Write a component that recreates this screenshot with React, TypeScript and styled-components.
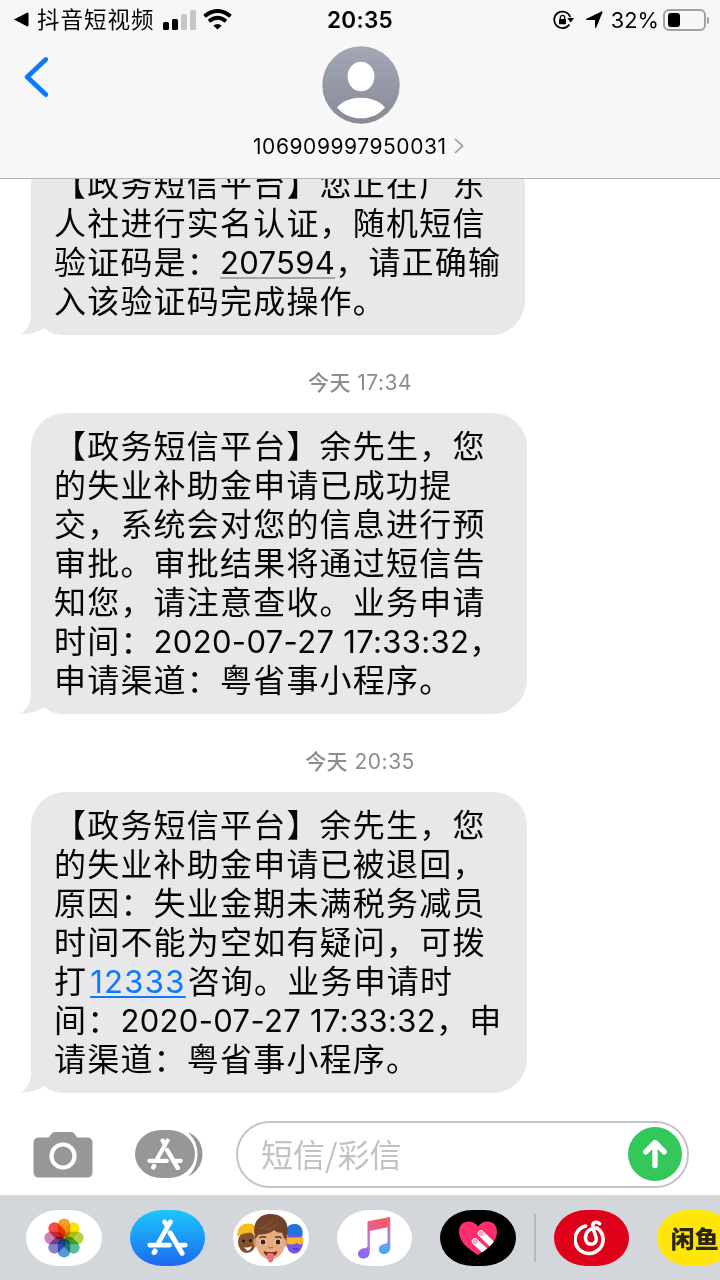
import React from 'react';
import styled, { createGlobalStyle } from 'styled-components';

const cjk = '"Noto Sans CJK SC", sans-serif';
const latin = 'Inter, "Noto Sans CJK SC", sans-serif';

type Part = string | { num?: string; code?: string; link?: string };

const messages: { time?: string; width: number; lines: Part[][] }[] = [
  {
    width: 494,
    lines: [
      ['【政务短信平台】您正在广东'],
      ['人社进行实名认证，随机短信'],
      ['验证码是：', { code: '207594' }, '，请正确输'],
      ['入该验证码完成操作。'],
    ],
  },
  {
    time: '17:34',
    width: 496,
    lines: [
      ['【政务短信平台】余先生，您'],
      ['的失业补助金申请已成功提'],
      ['交，系统会对您的信息进行预'],
      ['审批。审批结果将通过短信告'],
      ['知您，请注意查收。业务申请'],
      ['时间：', { num: '2020-07-27 17:33:32' }, '，'],
      ['申请渠道：粤省事小程序。'],
    ],
  },
  {
    time: '20:35',
    width: 496,
    lines: [
      ['【政务短信平台】余先生，您'],
      ['的失业补助金申请已被退回，'],
      ['原因：失业金期未满税务减员'],
      ['时间不能为空如有疑问，可拨'],
      ['打', { link: '12333' }, '咨询。业务申请时'],
      ['间：', { num: '2020-07-27 17:33:32' }, '，申'],
      ['请渠道：粤省事小程序。'],
    ],
  },
];

const renderPart = (part: Part, i: number) => {
  if (typeof part === 'string') return part;
  if (part.link) return <PhoneLink key={i}>{part.link}</PhoneLink>;
  if (part.code) return <Code key={i}>{part.code}</Code>;
  return <Digits key={i}>{part.num}</Digits>;
};

const StoreGlyph = ({ size }: { size: number }) => (
  <svg width={size} height={size * 0.9} viewBox="0 0 40 36" fill="none" stroke="#fff" strokeWidth="4.6" strokeLinecap="round">
    <path d="M22.8 2.8 11.6 22.6M17.2 2.8l2.600 4.400" />
    <path d="M22.500 13.500 34.200 33.4" strokeWidth="5" />
    <path d="M2.600 25.4H22M32 25.4h5.400" />
    <path d="M7.800 31.200 7 32.600" strokeWidth="5" />
  </svg>
);

const petals = ['#f9981d', '#f5e100', '#b0d136', '#4fb892', '#4a94d8', '#8478c6', '#cc78b4', '#f4453c'];

const PhotosIcon = () => (
  <svg width="40" height="40" viewBox="-20 -20 40 40">
    {petals.map((color, i) => (
      <rect
        key={color}
        x="-6.2"
        y="-19.6"
        width="12.4"
        height="19.2"
        rx="6.2"
        fill={color}
        fillOpacity="0.95"
        transform={`rotate(${i * 45})`}
        style={{ mixBlendMode: 'multiply' }}
      />
    ))}
  </svg>
);

const MemojiIcon = () => (
  <svg width="75" height="56" viewBox="0 0 75 56">
    <ellipse cx="14" cy="32" rx="9" ry="11" fill="#84512f" />
    <path d="M4 26.500C4 17.500 9 13.500 15 13.500S25 17 25 24Q14 20.500 4 26.500Z" fill="#f5bd16" />
    <circle cx="10.500" cy="31" r="1.500" fill="#2a1710" />
    <circle cx="17.500" cy="30.500" r="1.500" fill="#2a1710" />
    <path d="M11 37q4 1.500 8-1-2 5-5 4.500Z" fill="#fff" />
    <ellipse cx="61.500" cy="32" rx="8.500" ry="11.500" fill="#7557e8" />
    <path d="M53 25C52 17 57 13.500 62 14c6 .5 8.500 5 7.500 12Z" fill="#2373dd" />
    <path d="M53 27.500h17.500v5q-3 3.500-7 .5-4 3-10.500 0Z" fill="#f8b727" />
    <path d="M60 39h5" stroke="#5031b8" strokeWidth="1.500" />
    <ellipse cx="23" cy="32" rx="2.600" ry="4.500" fill="#d99569" />
    <ellipse cx="52" cy="32" rx="2.600" ry="4.500" fill="#d99569" />
    <path d="M23 20h29v13c0 9-7.500 16.500-14.500 16.500S23 42 23 33Z" fill="#e9aa7e" />
    <path d="M22.500 29C18 14 25 4 37 4c15 0 21 10 16 26-2-1.500-3-4-3.800-7.500-3 .8-6.200-.5-8.200-2.500-4 3.500-9.500 4.500-14.500 4.500-2 1-3 2.500-4 4.500Z" fill="#70432a" />
    <path d="M25 19c7-1 12-5 15-9M32 20c6-1 10-4 13-7" stroke="#935d3d" fill="none" />
    <path d="M26.500 28q3-2 6.500-.5M42 27.500q3.500-1.500 6.500 .5" stroke="#5a321d" strokeWidth="1.500" fill="none" />
    <ellipse cx="30" cy="32" rx="3.300" ry="2.800" fill="#fff" />
    <ellipse cx="45" cy="32" rx="3.300" ry="2.800" fill="#fff" />
    <circle cx="30" cy="32" r="2.500" fill="#3d251c" />
    <circle cx="45" cy="32" r="2.500" fill="#3d251c" />
    <path d="M35 37q2.500 1.800 5 0" stroke="#bd7550" strokeWidth="1.400" fill="none" />
    <path d="M30.500 41q7 2.500 14 0-1 5.500-7 5.500t-7-5.500Z" fill="#74242a" />
    <path d="M34 43.500q3.500-1 7 0v4q-1 5-3.500 5t-3.500-5Z" fill="#ed6f78" />
  </svg>
);

const MusicIcon = () => (
  <svg width="34" height="42" viewBox="0 0 34 42">
    <defs>
      <linearGradient id="note" x1="0" y1="1" x2="0.350" y2="0">
        <stop offset="0" stopColor="#7a63fb" />
        <stop offset="0.480" stopColor="#b577d8" />
        <stop offset="1" stopColor="#f8596d" />
      </linearGradient>
      <linearGradient id="noteRight" x1="0" y1="0" x2="0" y2="1">
        <stop offset="0" stopColor="#f8596d" />
        <stop offset="0.550" stopColor="#a58ad8" />
        <stop offset="1" stopColor="#3fadf5" />
      </linearGradient>
    </defs>
    <path d="M10.500 5.500q0-1.200 1.500-1.500L32 .3V10L12.800 14v20.500c0 5-3 7-6.300 7-3 0-5.500-2-5.500-4.500 0-4 3.500-5.500 7-6 2-.3 2.500-1 2.500-2.500Z" fill="url(#note)" />
    <path d="M30.500 .6 32 .3q1.300-.2 1.300 1V30c0 5-3 7-6.300 7-3 0-5.200-2-5.200-4.500 0-3.700 3.200-5.200 6.500-5.700 2-.3 2.200-1 2.200-2.500Z" fill="url(#noteRight)" />
  </svg>
);

const HeartIcon = () => (
  <svg width="40" height="36" viewBox="0 0 40 36">
    <defs>
      <clipPath id="heart">
        <path d="M20 35C8 28 1 20 1 12 1 5 5 1.500 10.500 1.500c4.500 0 7.500 2 9.500 5 2-3 5-5 9.500-5C35 1.500 39 5 39 12c0 8-7 16-19 23Z" />
      </clipPath>
    </defs>
    <g clipPath="url(#heart)">
      <path d="M0 0h40v36H0Z" fill="#ff2d6b" />
      <path d="M23 13.500 38 28M17 21.500l14 13" stroke="#fff" strokeWidth="6.400" strokeLinecap="round" />
      <circle cx="23" cy="13.500" r="1.900" fill="#ffb3c8" stroke="#ff7fa4" />
      <circle cx="17" cy="21.500" r="1.900" fill="#ffb3c8" stroke="#ff7fa4" />
    </g>
  </svg>
);

const NeteaseIcon = () => (
  <svg width="34" height="36" viewBox="0 0 34 36" fill="none" stroke="#fff" strokeWidth="3.600" strokeLinecap="round">
    <path d="M11.500 6A14 14 0 1 0 23 8C16 8 11.500 11.500 11.500 17.800c0 4 2.500 6.400 5.500 6.400s5.300-2.400 5.300-5.400c0-2.500-3.600-9.600-3.600-13.100 0-3.500 4-4.500 6.800-2" />
  </svg>
);

const App = () => {
  return (
    <Screen>
      <GlobalStyle />
      <Header>
        <StatusBar>
          <StatusLeft>
            <svg width="15" height="15" viewBox="0 0 15 15">
              <path d="M0 7.500 13 .7q1.500-.4 1.500 1v11.600q0 1.400-1.500 1Z" />
            </svg>
            <BackApp>抖音短视频</BackApp>
            <Signal>
              <Bar $h={8} />
              <Bar $h={11} />
              <Bar $h={16} $off />
              <Bar $h={20} $off />
            </Signal>
            <svg width="29" height="21" viewBox="0 0 29 21" fill="none" stroke="#000" strokeWidth="3.900">
              <path d="M1.500 7.300Q14.500-3.300 27.500 7.300" />
              <path d="M6 12.300Q14.500 5.300 23 12.300" />
              <path d="M10.300 16.400q4.200-3 8.400 0L14.500 20.400Z" fill="#000" stroke="none" />
            </svg>
          </StatusLeft>
          <Clock>20:35</Clock>
          <StatusRight>
            <svg width="21" height="20" viewBox="0 0 21 20">
              <path d="M17.300 7A8.300 8.300 0 1 0 16.400 14.500" fill="none" stroke="#000" strokeWidth="1.800" />
              <path d="M14.300 8H21l-3.400 4.500Z" />
              <rect x="6" y="9" width="7" height="5.300" rx="0.800" />
              <path d="M7.300 9.500V7.600a2.200 2.200 0 0 1 4.400 0v2" fill="none" stroke="#000" strokeWidth="1.300" />
            </svg>
            <Arrow width="18" height="18" viewBox="0 0 18 18">
              <path d="M17.500 1.200 11.200 16.500q-.8 1.200-1.200-.2V9H1.700q-1.600-.2-.2-1.200L16.500 .4q1.200-.4 1 .8Z" />
            </Arrow>
            <Percent>32%</Percent>
            <Battery />
          </StatusRight>
        </StatusBar>
        <NavRow>
          <svg width="26" height="42" viewBox="0 0 26 42" fill="none" stroke="#0a7aff" strokeWidth="4.800" strokeLinecap="round" strokeLinejoin="round">
            <path d="M21.700 3.500 3.200 21l18.500 17.500" />
          </svg>
          <svg width="78" height="78" viewBox="0 0 78 78">
            <defs>
              <linearGradient id="avatar" x1="0" y1="0" x2="0" y2="1">
                <stop offset="0" stopColor="#a3a8b6" />
                <stop offset="1" stopColor="#878a97" />
              </linearGradient>
            </defs>
            <circle cx="39" cy="39" r="38.700" fill="url(#avatar)" />
            <ellipse cx="39" cy="30.500" rx="13.400" ry="14.800" fill="#fff" />
            <path d="M15 61.500C21 54.500 30 51.700 39 51.700s18 2.800 24 9.800C57 69 48 72.300 39 72.300S21 69 15 61.500Z" fill="#fff" />
          </svg>
        </NavRow>
        <Contact>
          106909997950031
          <svg width="10" height="16" viewBox="0 0 10 16" fill="none" stroke="#9a9a9f" strokeWidth="1.700">
            <path d="m1 1 7.500 7L1 15" />
          </svg>
        </Contact>
      </Header>

      <Thread>
        {messages.map((message, i) => (
          <React.Fragment key={i}>
            {message.time && (
              <Stamp>
                <b>今天</b> {message.time}
              </Stamp>
            )}
            <Bubble $width={message.width}>
              {message.lines.map((line, n) => (
                <Line key={n}>{line.map(renderPart)}</Line>
              ))}
              <Tail width="46" height="44" viewBox="0 0 46 44">
                <path d="M11 0V23C11 32 8 39 0 43.500 9 44 18 41 24 37c6 5 12 7 22 7V0Z" fill="#e8e8ea" />
              </Tail>
            </Bubble>
          </React.Fragment>
        ))}
      </Thread>

      <Compose>
        <svg width="60" height="47" viewBox="0 0 60 47">
          <path d="M6 6.500h9c2 0 3-5.500 7-5.500h16c4 0 5 5.500 7 5.500h9q5.500 0 5.500 5.500v29q0 5.500-5.500 5.500H6Q.5 46.500.5 41V12Q.5 6.500 6 6.500Z" fill="#979797" />
          <circle cx="30" cy="25" r="11.500" fill="none" stroke="#fff" strokeWidth="4.200" />
        </svg>
        <AppsButton>
          <AppsPill>
            <StoreGlyph size={36} />
          </AppsPill>
          <svg width="16" height="46" viewBox="0 0 16 46">
            <path d="M1 1.500C9 4 15.500 12 15.500 23S9 42 1 45.500C7 40 10.500 32 10.500 23S7 7 1 1.500Z" fill="#979797" />
          </svg>
        </AppsButton>
        <Field>
          <Placeholder>短信/彩信</Placeholder>
          <Send>
            <svg width="26" height="30" viewBox="0 0 26 30" fill="none" stroke="#fff" strokeWidth="5.400" strokeLinecap="round" strokeLinejoin="round">
              <path d="M13 26.500V4M3.800 12.800 13 3.500l9.200 9.300" />
            </svg>
          </Send>
        </Field>
      </Compose>

      <Drawer>
        <AppIcon><PhotosIcon /></AppIcon>
        <AppIcon $bg="linear-gradient(#1cc8fb, #1d68f0)"><StoreGlyph size={41} /></AppIcon>
        <AppIcon><MemojiIcon /></AppIcon>
        <AppIcon><MusicIcon /></AppIcon>
        <AppIcon $bg="#000"><HeartIcon /></AppIcon>
        <Divider />
        <AppIcon $bg="#df0019"><NeteaseIcon /></AppIcon>
        <AppIcon $bg="#ffe60a"><Fish>闲鱼</Fish></AppIcon>
      </Drawer>
    </Screen>
  );
};

const GlobalStyle = createGlobalStyle`
  body {
    margin: 0;
    background: #fff;
  }
  * {
    box-sizing: border-box;
  }
  svg {
    display: block;
    flex-shrink: 0;
  }
`;

const Screen = styled.div`
  width: 720px;
  height: 1280px;
  display: flex;
  flex-direction: column;
  overflow: hidden;
  background: #fff;
  color: #050505;
  font-family: ${latin};
`;

const Header = styled.header`
  height: 179px;
  flex-shrink: 0;
  background: #f7f7f8;
  border-bottom: 1px solid #b4b4b6;
`;

const StatusBar = styled.div`
  height: 39px;
  display: grid;
  grid-template-columns: 1fr 80px 1fr;
  align-items: center;
`;

const StatusLeft = styled.div`
  display: flex;
  align-items: center;
  padding-left: 14px;
`;

const BackApp = styled.span`
  width: 118px;
  margin: 0 8px;
  font: 400 22.5px/36px ${cjk};
  letter-spacing: 1px;
  white-space: nowrap;
  padding-bottom: 3px;
`;

const Signal = styled.div`
  display: flex;
  align-items: flex-end;
  gap: 3px;
  margin-right: 7px;
`;

const Bar = styled.i<{ $h: number; $off?: boolean }>`
  width: 6px;
  height: ${({ $h }) => $h}px;
  border-radius: 1.5px;
  background: ${({ $off }) => ($off ? '#c6c6c7' : '#000')};
`;

const Clock = styled.div`
  text-align: center;
  font-size: 22.5px;
  font-weight: 600;
  letter-spacing: 0.3px;
`;

const StatusRight = styled.div`
  display: flex;
  align-items: center;
  justify-content: flex-end;
  padding-right: 14px;
`;

const Arrow = styled.svg`
  margin-left: 11px;
`;

const Percent = styled.span`
  margin: 0 4px 0 8px;
  font-size: 21.8px;
`;

const Battery = styled.div`
  position: relative;
  width: 43px;
  height: 22px;
  padding: 2px 2px 2px 3px;
  border: 2px solid #a2a2a4;
  border-radius: 6px;
  &::before {
    content: '';
    display: block;
    width: 12px;
    height: 14px;
    border-radius: 3px;
    background: #000;
  }
  &::after {
    content: '';
    position: absolute;
    top: 6px;
    right: -5px;
    width: 2px;
    height: 7px;
    border-radius: 0 2px 2px 0;
    background: #a2a2a4;
  }
`;

const NavRow = styled.div`
  display: grid;
  grid-template-columns: 297.5px 78px;
  padding: 7px 0 0 24px;
  height: 85px;
  > svg:first-child {
    margin-top: 10px;
  }
`;

const Contact = styled.div`
  display: flex;
  align-items: center;
  gap: 7px;
  height: 44px;
  padding-left: 253px;
  font-size: 21px;
  letter-spacing: 0.56px;
`;

const Thread = styled.main`
  height: 928px;
  flex-shrink: 0;
  display: flex;
  flex-direction: column;
  justify-content: flex-end;
  overflow: hidden;
  padding: 0 0 14px 31px;
`;

const Bubble = styled.div<{ $width: number }>`
  position: relative;
  z-index: 0;
  width: ${({ $width }) => $width}px;
  flex-shrink: 0;
  padding: 12px 0 16px 23px;
  border-radius: 34px;
  background: #e8e8ea;
`;

const Line = styled.p`
  margin: 0;
  height: 39px;
  font: 400 32px/39px ${cjk};
  letter-spacing: 1.2px;
  white-space: nowrap;
`;

const Digits = styled.span`
  font-family: ${latin};
  font-size: 31px;
  letter-spacing: 0.33px;
`;

const Code = styled(Digits)`
  text-decoration: underline 2px #a5a5a8;
  text-underline-offset: 3px;
  text-decoration-skip-ink: none;
`;

const PhoneLink = styled(Digits)`
  margin: 0 2px 0 3px;
  letter-spacing: 1.3px;
  color: #0a7aff;
  text-decoration: underline 2px;
  text-underline-offset: 3px;
`;

const Tail = styled.svg`
  position: absolute;
  z-index: -1;
  left: -11px;
  bottom: 0;
`;

const Stamp = styled.div`
  height: 78px;
  flex-shrink: 0;
  margin-left: -31px;
  padding-top: 17px;
  text-align: center;
  font-size: 21px;
  line-height: 61px;
  letter-spacing: 0.5px;
  color: #8c8c91;
  b {
    font-weight: 500;
  }
`;

const Compose = styled.div`
  height: 88px;
  flex-shrink: 0;
  display: flex;
  align-items: center;
  padding: 6px 0 0 33px;
`;

const AppsButton = styled.div`
  display: flex;
  align-items: center;
  width: 68px;
  margin: 0 33px 0 42px;
`;

const AppsPill = styled.div`
  display: flex;
  align-items: center;
  justify-content: center;
  width: 60px;
  height: 48px;
  flex-shrink: 0;
  margin-right: -8px;
  border-radius: 26px / 24px;
  background: #979797;
`;

const Field = styled.div`
  display: flex;
  align-items: center;
  justify-content: space-between;
  width: 453px;
  height: 67px;
  padding: 0 5px 0 23px;
  border: 2px solid #c5c5c8;
  border-radius: 34px;
`;

const Placeholder = styled.span`
  font: 400 32px/60px ${cjk};
  color: #c2c2c5;
  padding-bottom: 2px;
`;

const Send = styled.div`
  display: flex;
  align-items: center;
  justify-content: center;
  width: 54px;
  height: 54px;
  border-radius: 50%;
  background: #34c759;
`;

const Drawer = styled.footer`
  flex: 1;
  display: flex;
  align-items: center;
  gap: 28px;
  padding-left: 26px;
  background: #d3d6db;
`;

const AppIcon = styled.div<{ $bg?: string }>`
  display: flex;
  align-items: center;
  justify-content: center;
  width: 75.5px;
  height: 56px;
  flex-shrink: 0;
  overflow: hidden;
  border-radius: 32px / 28px;
  background: ${({ $bg }) => $bg || '#fff'};
`;

const Divider = styled.div`
  width: 2px;
  height: 48px;
  flex-shrink: 0;
  margin: 0 -10px;
  background: #b5b8bd;
`;

const Fish = styled.span`
  font: 900 24px/56px ${cjk};
  color: #2b2606;
`;

export default App;
